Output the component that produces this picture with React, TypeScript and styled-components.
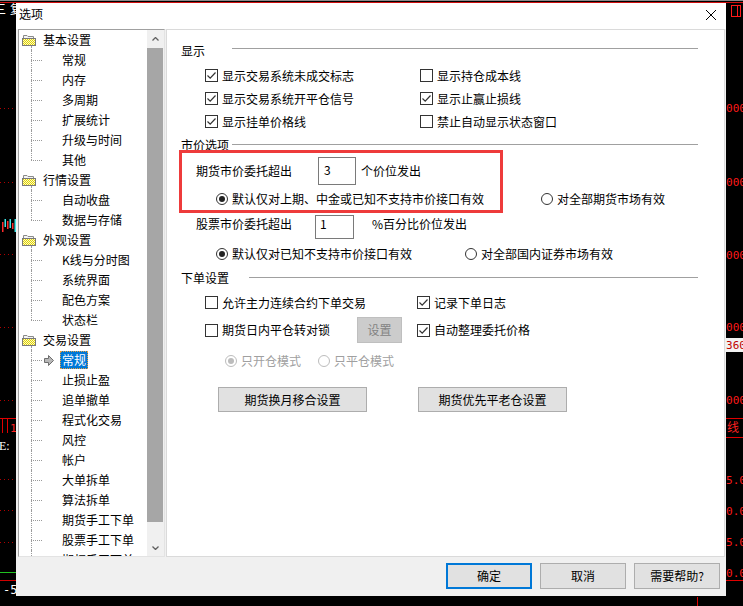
import React from "react";
import styled, { createGlobalStyle } from "styled-components";

const FONT = `"Noto Sans CJK SC", "Noto Sans", sans-serif`;

const GlobalStyle = createGlobalStyle`
  html, body { margin: 0; padding: 0; background: #000; }
  body { overflow: hidden; font-family: ${FONT}; }
  *, *::before, *::after { box-sizing: border-box; }
`;

/* ---------- desktop / background chart ---------- */

const Desktop = styled.div`
  position: relative;
  width: 743px;
  height: 606px;
  overflow: hidden;
  background: #000;
`;

const ChartLayer = styled.svg`
  position: absolute;
  left: 0;
  top: 0;
  display: block;
`;

/* ---------- dialog frame ---------- */

const Dialog = styled.div`
  position: absolute;
  left: 16px;
  top: 3px;
  width: 710px;
  height: 593px;
  display: flex;
  flex-direction: column;
  background: #f0f0f0;
  font-family: ${FONT};
  font-size: 12px;
  color: #000;
`;

const TitleBar = styled.div`
  flex: none;
  height: 26px;
  display: flex;
  align-items: flex-start;
  justify-content: space-between;
  padding: 0 10px 0 3px;
  background: #fff;
`;

const TitleText = styled.div`
  padding-top: 3px;
  line-height: 16px;
`;

const CloseGlyph = styled.svg`
  display: block;
  margin-top: 7px;
`;

const Body = styled.div`
  flex: none;
  height: 528px;
  display: flex;
  gap: 1px;
  padding: 0 1px 0 2px;
`;

/* ---------- tree ---------- */

const TreeBox = styled.div`
  flex: none;
  width: 147px;
  display: flex;
  background: #fff;
  border: 1px solid;
  border-color: #a0a0a0 #e3e3e3 #e3e3e3 #a0a0a0;
  overflow: hidden;
`;

const TreeList = styled.div`
  flex: 1;
  min-width: 0;
  overflow: hidden;
  white-space: nowrap;
  line-height: 16px;
`;

const GroupRow = styled.div`
  position: relative;
  height: 20px;
  display: flex;
  align-items: center;
  gap: 7px;
  padding-left: 3px;
  &::after {
    content: "";
    position: absolute;
    left: 12px;
    top: 16px;
    height: 4px;
    border-left: 1px dotted #9a9a9a;
  }
`;

const FolderSvg = styled.svg`
  flex: none;
  display: block;
`;

const ChildRow = styled.div<{ $last: boolean }>`
  position: relative;
  height: 20px;
  display: flex;
  align-items: center;
  padding-left: 25px;
  &::before {
    content: "";
    position: absolute;
    left: 12px;
    top: 0;
    height: ${(p) => (p.$last ? 10 : 20)}px;
    border-left: 1px dotted #9a9a9a;
  }
  &::after {
    content: "";
    position: absolute;
    left: 12px;
    top: 10px;
    width: 11px;
    border-top: 1px dotted #9a9a9a;
  }
`;

const Marker = styled.span`
  flex: none;
  width: 16px;
  height: 20px;
  display: flex;
  align-items: center;
`;

const ChildLabel = styled.span<{ $selected?: boolean }>`
  padding: 0 2px;
  height: 18px;
  line-height: 18px;
  background: ${(p) => (p.$selected ? "#0078d7" : "transparent")};
  color: ${(p) => (p.$selected ? "#fff" : "#000")};
  outline: ${(p) => (p.$selected ? "1px dotted #e8a040" : "none")};
  outline-offset: -1px;
`;

const ScrollBar = styled.div`
  flex: none;
  width: 17px;
  display: flex;
  flex-direction: column;
  background: #f0f0f0;
`;

const ScrollButton = styled.div<{ $h: number }>`
  flex: none;
  height: ${(p) => p.$h}px;
  display: flex;
  align-items: center;
  justify-content: center;
`;

const ScrollThumb = styled.div`
  flex: none;
  height: 474px;
  margin: 0 1px 0 0;
  background: #a6a6a6;
`;

const ScrollTrack = styled.div`
  flex: 1;
`;

/* ---------- option panel ---------- */

const Panel = styled.div`
  position: relative;
  flex: 1;
  min-width: 0;
  background: #fff;
  border: 1px solid #dadada;
  padding: 12px 26px 0 14px;
  white-space: nowrap;
  line-height: 16px;
`;

const SectionHeader = styled.div<{ $mt: number }>`
  display: flex;
  height: 18px;
  margin-top: ${(p) => p.$mt}px;
`;

const HeaderLabel = styled.span<{ $w: number }>`
  flex: none;
  width: ${(p) => p.$w}px;
  line-height: 18px;
`;

const HeaderRule = styled.span<{ $top: number }>`
  flex: 1;
  height: 1px;
  margin-top: ${(p) => p.$top}px;
  background: #a0a0a0;
`;

const CheckGrid = styled.div`
  display: grid;
  grid-template-columns: 215px auto;
  grid-auto-rows: 23px;
  align-items: center;
  margin-top: 4px;
  padding-left: 24px;
`;

const Row = styled.div<{ $mt: number; $pl: number; $h: number; $align?: string; $gap?: number }>`
  display: flex;
  align-items: ${(p) => p.$align ?? "center"};
  gap: ${(p) => p.$gap ?? 0}px;
  height: ${(p) => p.$h}px;
  margin-top: ${(p) => p.$mt}px;
  padding-left: ${(p) => p.$pl}px;
`;

const Cell = styled.div<{ $w: number }>`
  flex: none;
  width: ${(p) => p.$w}px;
  display: flex;
  align-items: center;
`;

const Text = styled.span<{ $w?: number; $ml?: number; $lh?: number }>`
  flex: none;
  width: ${(p) => (p.$w ? `${p.$w}px` : "auto")};
  margin-left: ${(p) => p.$ml ?? 0}px;
  line-height: ${(p) => p.$lh ?? 16}px;
`;

const Option = styled.span<{ $disabled?: boolean }>`
  display: inline-flex;
  align-items: center;
  gap: 4px;
  color: ${(p) => (p.$disabled ? "#a0a0a0" : "#000")};
`;

const Box = styled.span`
  flex: none;
  width: 13px;
  height: 13px;
  border: 1px solid #333;
  background: #fff;
  display: flex;
  align-items: center;
  justify-content: center;
`;

const Circle = styled.span<{ $disabled?: boolean }>`
  flex: none;
  width: 12px;
  height: 12px;
  border-radius: 50%;
  border: 1px solid ${(p) => (p.$disabled ? "#bcbcbc" : "#333")};
  background: #fff;
  display: flex;
  align-items: center;
  justify-content: center;
`;

const Dot = styled.span<{ $disabled?: boolean }>`
  width: 6px;
  height: 6px;
  border-radius: 50%;
  background: ${(p) => (p.$disabled ? "#bcbcbc" : "#222")};
`;

const EditBox = styled.div<{ $w: number; $h: number; $pt: number; $pl: number }>`
  flex: none;
  width: ${(p) => p.$w}px;
  height: ${(p) => p.$h}px;
  padding: ${(p) => p.$pt}px 0 0 ${(p) => p.$pl}px;
  border: 1px solid #7a7a7a;
  background: #fff;
  line-height: 16px;
`;

const PushButton = styled.button<{ $w: number; $h: number; $disabled?: boolean }>`
  flex: none;
  width: ${(p) => p.$w}px;
  height: ${(p) => p.$h}px;
  padding: 0;
  display: flex;
  align-items: center;
  justify-content: center;
  font: inherit;
  line-height: 16px;
  background: ${(p) => (p.$disabled ? "#cccccc" : "#e1e1e1")};
  border: 1px solid ${(p) => (p.$disabled ? "#bfbfbf" : "#adadad")};
  color: ${(p) => (p.$disabled ? "#838383" : "#000")};
`;

const Annotation = styled.div`
  position: absolute;
  left: 12px;
  top: 120px;
  width: 324px;
  height: 63px;
  border: 3px solid #ee3b3b;
  pointer-events: none;
`;

/* ---------- footer ---------- */

const Footer = styled.div`
  flex: 1;
  display: flex;
  justify-content: flex-end;
  align-items: flex-start;
  gap: 8px;
  padding: 6px 6px 0 0;
`;

const DialogButton = styled.button<{ $default?: boolean }>`
  width: 86px;
  height: 26px;
  padding: 0;
  font: inherit;
  line-height: 16px;
  color: #000;
  background: #e1e1e1;
  border: ${(p) => (p.$default ? "2px solid #0078d7" : "1px solid #adadad")};
`;

/* ---------- small parts ---------- */

const FolderIcon = () => (
  <FolderSvg width="14" height="12" viewBox="0 0 14 12">
    <defs>
      <pattern id="folderDither" width="2" height="2" patternUnits="userSpaceOnUse">
        <rect width="2" height="2" fill="#fbf8c8" />
        <rect width="1" height="1" fill="#e2d400" />
        <rect x="1" y="1" width="1" height="1" fill="#e2d400" />
      </pattern>
    </defs>
    <path d="M1.5 4.5 V1.5 H5 L6 2.5 H11.5 V4.5" fill="#f4f4f4" stroke="#8a8a8a" />
    <rect x="0.5" y="4.5" width="13" height="7" fill="url(#folderDither)" stroke="#7a7a7a" />
  </FolderSvg>
);

const SelArrow = () => (
  <svg width="10" height="11" viewBox="0 0 10 11">
    <path d="M0.5 3.5 H4.5 V0.5 L9.5 5.5 L4.5 10.5 V7.5 H0.5 Z" fill="#b8b8b8" stroke="#6e6e6e" />
  </svg>
);

const Chevron = ({ up }: { up?: boolean }) => (
  <svg width="7" height="4" viewBox="0 0 7 4">
    <polyline
      points={up ? "0.5,3.5 3.5,0.5 6.5,3.5" : "0.5,0.5 3.5,3.5 6.5,0.5"}
      fill="none"
      stroke="#606060"
      strokeWidth="1.3"
    />
  </svg>
);

const CheckOption = ({ label, checked }: { label: string; checked?: boolean }) => (
  <Option>
    <Box>
      {checked && (
        <svg width="11" height="11" viewBox="0 0 11 11">
          <polyline points="1.5,5.5 4.2,8.2 9.5,2.5" fill="none" stroke="#333" strokeWidth="1.2" />
        </svg>
      )}
    </Box>
    {label}
  </Option>
);

const RadioOption = ({ label, checked, disabled }: { label: string; checked?: boolean; disabled?: boolean }) => (
  <Option $disabled={disabled}>
    <Circle $disabled={disabled}>{checked && <Dot $disabled={disabled} />}</Circle>
    {label}
  </Option>
);

/* ---------- data ---------- */

const tree = [
  { label: "基本设置", children: ["常规", "内存", "多周期", "扩展统计", "升级与时间", "其他"] },
  { label: "行情设置", children: ["自动收盘", "数据与存储"] },
  { label: "外观设置", children: ["K线与分时图", "系统界面", "配色方案", "状态栏"] },
  {
    label: "交易设置",
    selected: 0,
    children: [
      "常规",
      "止损止盈",
      "追单撤单",
      "程式化交易",
      "风控",
      "帐户",
      "大单拆单",
      "算法拆单",
      "期货手工下单",
      "股票手工下单",
      "期权手工下单",
    ],
  },
];

const leftDots = [108, 182, 254, 327, 400, 479, 510, 542];
const rightLabels: { y: number; t: string }[] = [
  { y: 108, t: "8000" },
  { y: 182, t: "6000" },
  { y: 255, t: "4000" },
  { y: 327, t: "2000" },
  { y: 400, t: "0000" },
  { y: 480, t: "15.0" },
  { y: 511, t: "10.0" },
  { y: 542, t: "15.0" },
  { y: 573, t: "10.0" },
];
const candles = [
  { x: 2, y: 222, h: 10, c: "#ff2a2a" },
  { x: 4.5, y: 219, h: 8, c: "#3ee6e6" },
  { x: 7, y: 221, h: 8, c: "#ff2a2a" },
  { x: 9.5, y: 219, h: 9, c: "#3ee6e6" },
  { x: 12, y: 223, h: 6, c: "#ff2a2a" },
  { x: 14.5, y: 219, h: 13, c: "#3ee6e6" },
];

const Chart = () => (
  <ChartLayer width="743" height="606" viewBox="0 0 743 606">
    <defs>
      <clipPath id="leftStrip">
        <rect x="0" y="0" width="16" height="606" />
      </clipPath>
      <clipPath id="rightStrip">
        <rect x="726" y="0" width="17" height="606" />
      </clipPath>
    </defs>
    <rect width="743" height="606" fill="#000" />
    <rect x="0" y="0" width="743" height="1" fill="#8a8a8a" />
    <rect x="0" y="2" width="743" height="1" fill="#d01010" />
    <g clipPath="url(#leftStrip)">
      <text x="-6" y="14" fill="#fff" fontSize="12" fontFamily="Noto Sans CJK SC, sans-serif">三</text>
      <text x="10" y="14" fill="#fff" fontSize="12" fontFamily="Noto Sans CJK SC, sans-serif">复</text>
      {leftDots.map((y) => (
        <line key={y} x1="0" x2="16" y1={y + 0.5} y2={y + 0.5} stroke="#b00000" strokeDasharray="1 3" />
      ))}
      {candles.map((k, i) => (
        <rect key={i} x={k.x} y={k.y} width="1.5" height={k.h} fill={k.c} />
      ))}
      <line x1="0" x2="16" y1="418.5" y2="418.5" stroke="#e00000" />
      <line x1="2.5" x2="2.5" y1="418" y2="433" stroke="#e00000" />
      <line x1="7.5" x2="7.5" y1="418" y2="433" stroke="#e00000" />
      <text x="10" y="432" fill="#ff2020" fontSize="11" fontFamily="DejaVu Sans Mono, monospace">1</text>
      <text x="-1" y="450" fill="#fff" fontSize="12" fontFamily="Liberation Serif, serif">E:</text>
      <line x1="0" x2="16" y1="572.5" y2="572.5" stroke="#20c020" />
      <line x1="0" x2="16" y1="580.5" y2="580.5" stroke="#d00000" />
      <text x="3" y="594" fill="#fff" fontSize="12" fontFamily="DejaVu Sans Mono, monospace">-5</text>
    </g>

    <g clipPath="url(#rightStrip)">
      {rightLabels.map((l) => (
        <text
          key={l.y}
          x="746"
          y={l.y + 4}
          textAnchor="end"
          fill="#ff1a1a"
          fontSize="11"
          fontFamily="DejaVu Sans Mono, monospace"
        >
          {l.t}
        </text>
      ))}
      <rect x="726" y="338" width="17" height="14" fill="#f2f2f2" />
      <text x="746" y="349" textAnchor="end" fill="#c00000" fontSize="11" fontFamily="DejaVu Sans Mono, monospace">
        1360
      </text>
      <line x1="726" x2="743" y1="418.5" y2="418.5" stroke="#e00000" />
      <line x1="726" x2="743" y1="437.5" y2="437.5" stroke="#e00000" />
      <text x="727" y="432" fill="#ff2020" fontSize="12" fontFamily="Noto Sans CJK SC, sans-serif">线</text>
      <line x1="726" x2="743" y1="580.5" y2="580.5" stroke="#e00000" />
      <rect x="731.5" y="5.5" width="9" height="11" fill="none" stroke="#ff1a1a" />
      <line x1="737.5" x2="737.5" y1="5.5" y2="16.5" stroke="#ff1a1a" />
    </g>
    <line x1="697.5" x2="697.5" y1="597" y2="606" stroke="#e00000" />
  </ChartLayer>
);

/* ---------- app ---------- */

export default function App() {
  return (
    <>
      <GlobalStyle />
      <Desktop>
        <Chart />
        <Dialog>
          <TitleBar>
            <TitleText>选项</TitleText>
            <CloseGlyph width="10" height="10" viewBox="0 0 10 10">
              <path d="M0 0 L10 10 M10 0 L0 10" stroke="#000" strokeWidth="1" />
            </CloseGlyph>
          </TitleBar>

          <Body>
            <TreeBox>
              <TreeList>
                {tree.map((g) => (
                  <React.Fragment key={g.label}>
                    <GroupRow>
                      <FolderIcon />
                      <span>{g.label}</span>
                    </GroupRow>
                    {g.children.map((c, i) => {
                      const sel = g.selected === i;
                      return (
                        <ChildRow key={c + i} $last={i === g.children.length - 1}>
                          <Marker>{sel && <SelArrow />}</Marker>
                          <ChildLabel $selected={sel}>{c}</ChildLabel>
                        </ChildRow>
                      );
                    })}
                  </React.Fragment>
                ))}
              </TreeList>
              <ScrollBar>
                <ScrollButton $h={18}>
                  <Chevron up />
                </ScrollButton>
                <ScrollThumb />
                <ScrollTrack />
                <ScrollButton $h={17}>
                  <Chevron />
                </ScrollButton>
              </ScrollBar>
            </TreeBox>

            <Panel>
              <SectionHeader $mt={0}>
                <HeaderLabel $w={51}>显示</HeaderLabel>
                <HeaderRule $top={6} />
              </SectionHeader>
              <CheckGrid>
                <CheckOption checked label="显示交易系统未成交标志" />
                <CheckOption label="显示持仓成本线" />
                <CheckOption checked label="显示交易系统开平仓信号" />
                <CheckOption checked label="显示止赢止损线" />
                <CheckOption checked label="显示挂单价格线" />
                <CheckOption label="禁止自动显示状态窗口" />
              </CheckGrid>

              <SectionHeader $mt={3}>
                <HeaderLabel $w={51}>市价选项</HeaderLabel>
                <HeaderRule $top={8} />
              </SectionHeader>
              <Row $mt={3} $pl={15} $h={28}>
                <Text $w={122}>期货市价委托超出</Text>
                <EditBox $w={38} $h={28} $pt={4} $pl={5}>
                  3
                </EditBox>
                <Text $ml={5}>个价位发出</Text>
              </Row>
              <Row $mt={3} $pl={35} $h={21}>
                <Cell $w={325}>
                  <RadioOption checked label="默认仅对上期、中金或已知不支持市价接口有效" />
                </Cell>
                <RadioOption label="对全部期货市场有效" />
              </Row>
              <Row $mt={6} $pl={15} $h={24} $align="flex-start">
                <Text $w={119} $lh={18}>
                  股票市价委托超出
                </Text>
                <EditBox $w={39} $h={24} $pt={0} $pl={4}>
                  1
                </EditBox>
                <Text $ml={18} $lh={18}>
                  %百分比价位发出
                </Text>
              </Row>
              <Row $mt={5} $pl={35} $h={20}>
                <Cell $w={249}>
                  <RadioOption checked label="默认仅对已知不支持市价接口有效" />
                </Cell>
                <RadioOption label="对全部国内证券市场有效" />
              </Row>

              <SectionHeader $mt={5}>
                <HeaderLabel $w={68}>下单设置</HeaderLabel>
                <HeaderRule $top={8} />
              </SectionHeader>
              <Row $mt={4} $pl={24} $h={23}>
                <Cell $w={212}>
                  <CheckOption label="允许主力连续合约下单交易" />
                </Cell>
                <CheckOption checked label="记录下单日志" />
              </Row>
              <Row $mt={3} $pl={24} $h={26}>
                <Cell $w={212}>
                  <Cell $w={152}>
                    <CheckOption label="期货日内平仓转对锁" />
                  </Cell>
                  <PushButton $w={45} $h={26} $disabled disabled>
                    设置
                  </PushButton>
                </Cell>
                <CheckOption checked label="自动整理委托价格" />
              </Row>
              <Row $mt={7} $pl={44} $h={21}>
                <Cell $w={93}>
                  <RadioOption disabled checked label="只开仓模式" />
                </Cell>
                <RadioOption disabled label="只平仓模式" />
              </Row>
              <Row $mt={16} $pl={37} $h={25} $gap={51}>
                <PushButton $w={149} $h={25}>
                  期货换月移合设置
                </PushButton>
                <PushButton $w={149} $h={25}>
                  期货优先平老仓设置
                </PushButton>
              </Row>

              <Annotation />
            </Panel>
          </Body>

          <Footer>
            <DialogButton $default>确定</DialogButton>
            <DialogButton>取消</DialogButton>
            <DialogButton>需要帮助?</DialogButton>
          </Footer>
        </Dialog>
      </Desktop>
    </>
  );
}
